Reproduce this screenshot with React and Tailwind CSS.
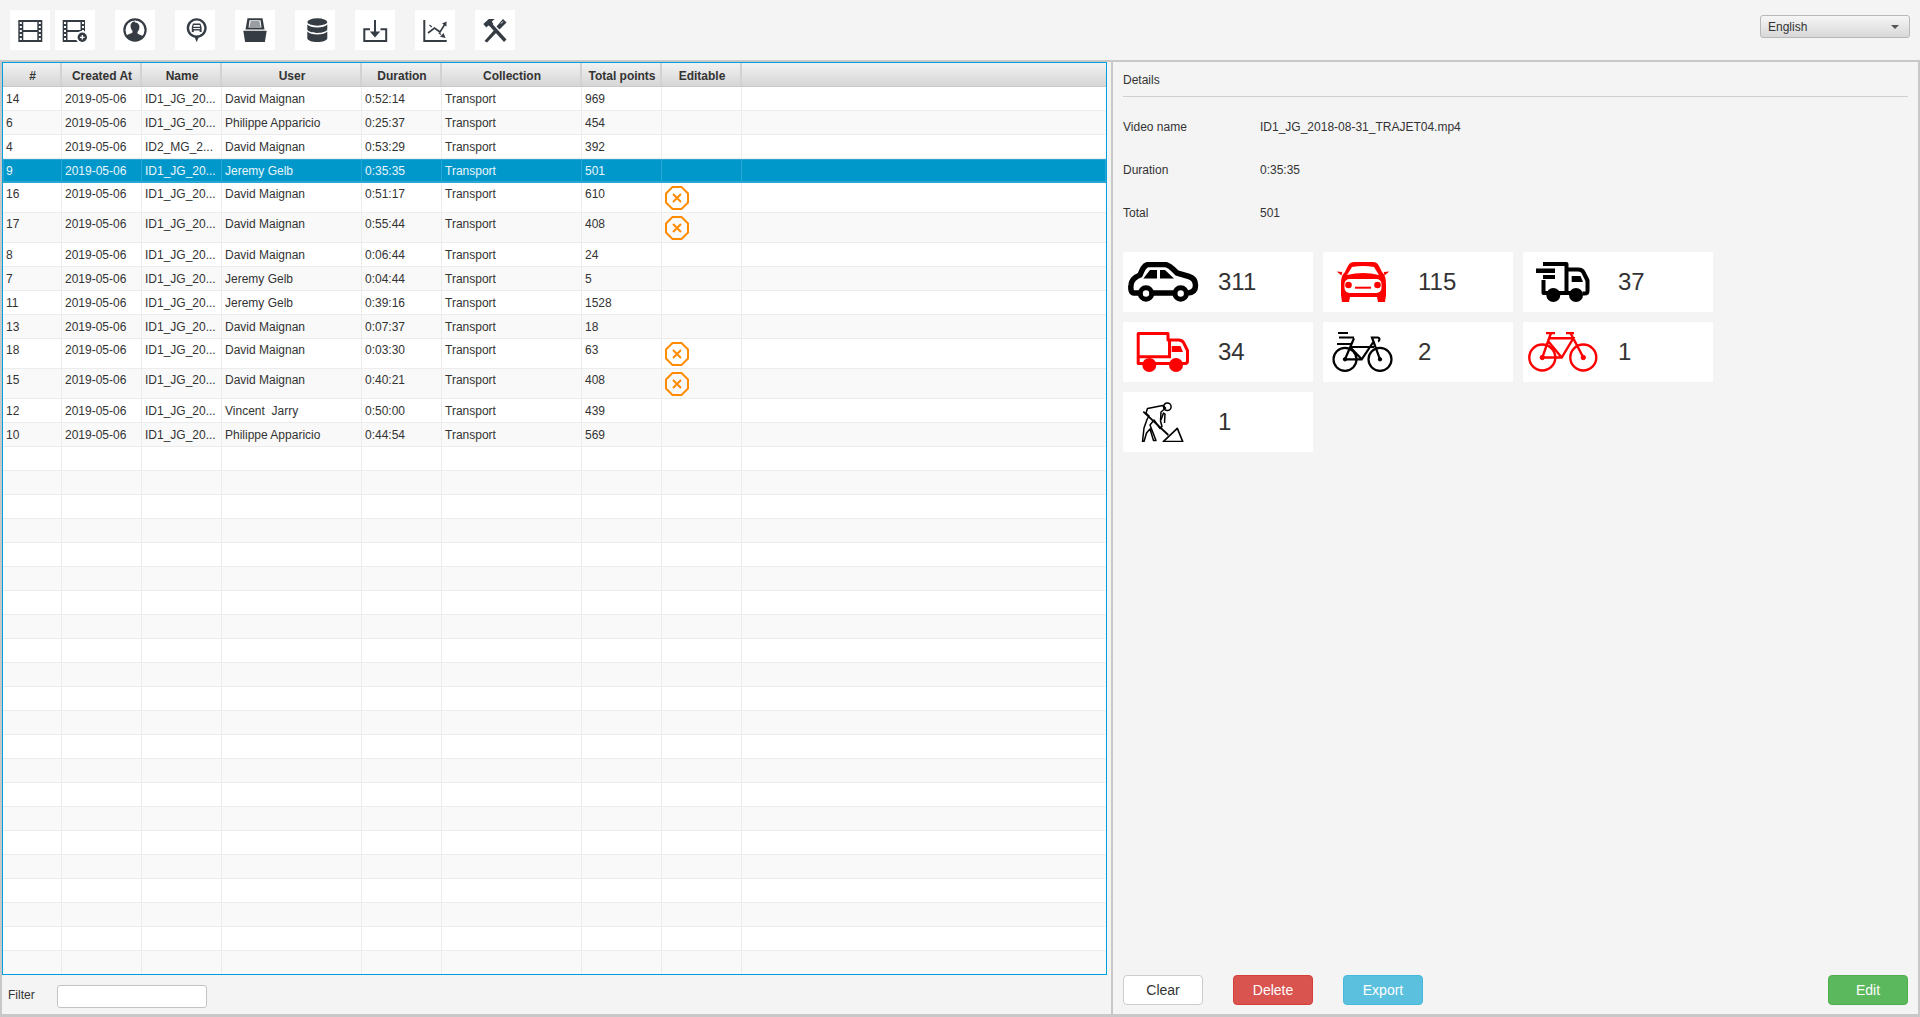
import React from 'react';

const INK = '#363c44';

const columns = [
  { label: '#', width: 'w-[59px]', key: 'id' },
  { label: 'Created At', width: 'w-[80px]', key: 'date' },
  { label: 'Name', width: 'w-[80px]', key: 'name' },
  { label: 'User', width: 'w-[140px]', key: 'user' },
  { label: 'Duration', width: 'w-[80px]', key: 'duration' },
  { label: 'Collection', width: 'w-[140px]', key: 'collection' },
  { label: 'Total points', width: 'w-[80px]', key: 'points' },
  { label: 'Editable', width: 'w-[80px]', key: 'editable' },
];

const row = (id, name, user, duration, points, locked = false, selected = false) => ({
  id, date: '2019-05-06', name, user, duration, collection: 'Transport', points, locked, selected,
});

const rows = [
  row('14', 'ID1_JG_20...', 'David Maignan', '0:52:14', '969'),
  row('6', 'ID1_JG_20...', 'Philippe Apparicio', '0:25:37', '454'),
  row('4', 'ID2_MG_2...', 'David Maignan', '0:53:29', '392'),
  row('9', 'ID1_JG_20...', 'Jeremy Gelb', '0:35:35', '501', false, true),
  row('16', 'ID1_JG_20...', 'David Maignan', '0:51:17', '610', true),
  row('17', 'ID1_JG_20...', 'David Maignan', '0:55:44', '408', true),
  row('8', 'ID1_JG_20...', 'David Maignan', '0:06:44', '24'),
  row('7', 'ID1_JG_20...', 'Jeremy Gelb', '0:04:44', '5'),
  row('11', 'ID1_JG_20...', 'Jeremy Gelb', '0:39:16', '1528'),
  row('13', 'ID1_JG_20...', 'David Maignan', '0:07:37', '18'),
  row('18', 'ID1_JG_20...', 'David Maignan', '0:03:30', '63', true),
  row('15', 'ID1_JG_20...', 'David Maignan', '0:40:21', '408', true),
  row('12', 'ID1_JG_20...', 'Vincent  Jarry', '0:50:00', '439'),
  row('10', 'ID1_JG_20...', 'Philippe Apparicio', '0:44:54', '569'),
];

const emptyRows = Array.from({ length: 22 }, (_, i) => i);

const ToolIcon = ({ children }) => (
  <button className="w-10 h-10 bg-white shrink-0">
    <svg viewBox="0 0 40 40" className="w-10 h-10">{children}</svg>
  </button>
);

const FilmFrame = ({ x }) => (
  <g>
    <rect x={x} y="10" width="24" height="22" fill={INK} />
    <rect x={x + 5} y="12" width="14" height="8" fill="white" />
    <rect x={x + 5} y="22" width="14" height="8" fill="white" />
    {[12, 16, 20, 24, 28].map((y) => (
      <g key={y}>
        <rect x={x + 1.5} y={y} width="2" height="2" fill="white" />
        <rect x={x + 20.5} y={y} width="2" height="2" fill="white" />
      </g>
    ))}
  </g>
);

const Toolbar = () => (
  <div className="flex">
    <ToolIcon><FilmFrame x={8.3} /></ToolIcon>
    <div className="ml-[5px]">
      <ToolIcon>
        <rect x="7.7" y="10" width="22.3" height="22" fill={INK} />
        <rect x="12.5" y="12" width="13" height="8" fill="white" />
        <rect x="12.5" y="22" width="13" height="8" fill="white" />
        {[12, 16, 20, 24, 28].map((y) => (
          <g key={y}>
            <rect x="9" y={y} width="2" height="2" fill="white" />
            <rect x="27" y={y} width="2" height="2" fill="white" />
          </g>
        ))}
        <circle cx="27.3" cy="27.3" r="6.5" fill="white" />
        <circle cx="27.3" cy="27.3" r="4.7" fill={INK} />
        <path d="M27.3 25v4.6M25 27.3h4.6" stroke="white" strokeWidth="1.3" />
      </ToolIcon>
    </div>
    <div className="ml-5">
      <ToolIcon>
        <circle cx="20" cy="20" r="10.6" fill="white" stroke={INK} strokeWidth="2.2" />
        <path d="M20 12.5c3 0 4.6 2.3 4.4 5-.1 2-1 3.4-1.9 4.4v1.6c1 1 5 1.8 6.3 3.4A10.4 10.4 0 0 1 20 30.6a10.4 10.4 0 0 1-8.8-4.7c1.3-1.6 5.3-2.4 6.3-3.4v-1.6c-.9-1-1.8-2.4-1.9-4.4-.2-2.7 1.4-5 4.4-5z" fill={INK} />
      </ToolIcon>
    </div>
    <div className="ml-5">
      <ToolIcon>
        <path d="M21.7 8.3c5.5 0 10 4.4 10 9.8 0 4.9-3.500 9-8.200 9.700l-1.800 4.500-1.800-4.500c-4.700-.7-8.200-4.800-8.200-9.700 0-5.400 4.500-9.800 10-9.800z" fill={INK} />
        <circle cx="21.7" cy="18" r="7.6" fill="white" />
        <path d="M18 13.5h7.4l1.200 3.500v5h-2v-1.400h-5.800V22h-2v-5z" fill={INK} />
        <path d="M18.800 14.900h5.800l.6 1.800h-7z" fill="white" />
        <path d="M18.200 18.600h6.900" stroke="white" strokeWidth="1" />
      </ToolIcon>
    </div>
    <div className="ml-5">
      <ToolIcon>
        <path d="M12.500 8.300h15l2 11.200h-19z" fill={INK} />
        <path d="M14.500 10.300h11l1 7.200h-13z" fill="white" />
        <path d="M15.500 12h9M15 14h10M14.500 16h11" stroke={INK} strokeWidth="1.200" />
        <path d="M8.300 20.800h23.400l-1.800 11.200H10.100z" fill={INK} />
      </ToolIcon>
    </div>
    <div className="ml-5">
      <ToolIcon>
        <ellipse cx="22.300" cy="12" rx="10" ry="3.700" fill={INK} />
        <path d="M12.300 14.600c1.600 2 5.500 3 10 3s8.400-1 10-3v4.600c0 2-4.500 3.700-10 3.700s-10-1.700-10-3.700z" fill={INK} />
        <path d="M12.300 21.600c1.600 2 5.500 3 10 3s8.400-1 10-3v6.600c0 2-4.500 3.800-10 3.800s-10-1.800-10-3.800z" fill={INK} />
      </ToolIcon>
    </div>
    <div className="ml-5">
      <ToolIcon>
        <path d="M15 19.300H9.300V31h21.900V19.300h-5.700" fill="none" stroke={INK} strokeWidth="2" />
        <path d="M20 10v15" stroke={INK} strokeWidth="2" />
        <path d="M14.800 21.500h10.400L20 27.500z" fill={INK} />
      </ToolIcon>
    </div>
    <div className="ml-5">
      <ToolIcon>
        <path d="M9.300 10v21h22.400" fill="none" stroke={INK} strokeWidth="2" />
        <path d="M13 23l6.500-5 5.500 4 5-8" fill="none" stroke={INK} strokeWidth="1.600" />
        <path d="M27 13.500l4.500-2v5zM30.500 28l-5.500-1.300 3.600-3.600z" fill={INK} />
        <path d="M14.500 15l12 10" stroke={INK} strokeWidth="1.200" strokeDasharray="3 9" />
      </ToolIcon>
    </div>
    <div className="ml-5">
      <ToolIcon>
        <path d="M9.500 31l11-12.500 2.500 2.500L12 32.500z" fill={INK} />
        <path d="M8.300 14l5.500-5h6l-3 2.500 1.500 2.500-2.500 2.500-2.500-1-2 2z" fill={INK} />
        <path d="M14 15.500L29 32l2.500-2.500L17 13.500z" fill={INK} />
        <path d="M21.500 16.500l6.500-7.500 3.500 3.500-7 7z" fill={INK} />
        <path d="M26 13.500l1.800-2" stroke="white" strokeWidth="1" />
      </ToolIcon>
    </div>
  </div>
);

const LanguageSelect = () => (
  <div className="mt-[15px] mr-[10px] w-[150px] h-[23px] flex items-center justify-between px-[7px] text-[12px] text-[#333] border border-[#b8b8b8] rounded-[3px] bg-gradient-to-b from-[#f6f6f6] to-[#d8d8d8]">
    <span>English</span>
    <svg viewBox="0 0 8 4" className="w-2 h-1 mr-[3px]"><path d="M0 0h8L4 4z" fill="#555" /></svg>
  </div>
);

const LockedIcon = () => (
  <svg viewBox="0 0 24 24" className="w-6 h-6">
    <path d="M7.500 1h9L23 7.500v9L16.500 23h-9L1 16.500v-9z" fill="none" stroke="#ff8c00" strokeWidth="2" />
    <path d="M8 8l8 8M16 8l-8 8" stroke="#ff8c00" strokeWidth="2" />
  </svg>
);

const TableRow = ({ data, striped }) => {
  const tall = data.locked;
  const tone = data.selected
    ? 'bg-[#0097cb] text-[#eaf6fb] border-[#2aa6d2] shadow-[inset_0_0_0_1px_#2aa6d2]'
    : striped
      ? 'bg-[#f9f9f9] text-[#333] border-[#ececec]'
      : 'bg-white text-[#333] border-[#ececec]';
  const divider = data.selected ? 'border-[#27a6d3]' : 'border-[#ececec]';

  return (
    <div className={`flex border-b ${tone} ${tall ? 'h-[30px]' : 'h-6'}`}>
      {columns.map((col) => (
        <div
          key={col.key}
          className={`${col.width} shrink-0 border-r ${divider} pl-[3px] whitespace-pre leading-[14px] ${tall ? 'pt-[4px]' : 'pt-[5px]'}`}
        >
          {col.key === 'editable'
            ? data.locked && <div className="-mt-px"><LockedIcon /></div>
            : data[col.key]}
        </div>
      ))}
    </div>
  );
};

const VideoTable = () => (
  <div className="h-[913px] border border-[#009fe0] overflow-hidden text-[12px] bg-white">
    <div className="flex h-6 bg-gradient-to-b from-[#f2f2f2] to-[#d6d6d6] border-b border-[#c8c8c8] font-bold text-[#333]">
      {columns.map((col) => (
        <div key={col.key} className={`${col.width} shrink-0 border-r-2 border-[#d2d2d2] flex items-center justify-center pl-[2px] pt-[2px]`}>
          {col.label}
        </div>
      ))}
    </div>
    {rows.map((data, i) => (
      <TableRow key={data.id} data={data} striped={i % 2 === 1} />
    ))}
    {emptyRows.map((i) => (
      <div key={i} className={`flex h-6 border-b border-[#ececec] ${i % 2 === 0 ? 'bg-white' : 'bg-[#f9f9f9]'}`}>
        {columns.map((col) => (
          <div key={col.key} className={`${col.width} shrink-0 border-r border-[#ececec]`} />
        ))}
      </div>
    ))}
  </div>
);

const CarIcon = () => (
  <svg viewBox="0 0 80 40" className="w-20 h-10">
    <path d="M16 31h-5c-3 0-3.500-4-3-8 .5-5 4-8 9-10 2-5 4-10 8-10.500h17c4 0 8 4.500 12 8.500l12 3.500c5 1.500 6.500 5 6.500 9 0 4-2 7-7.500 7.500M29 31h22" fill="none" stroke="black" strokeWidth="5.500" />
    <path d="M20.300 16.500L27 8h7v8.500zM37 8h5l9 8.500H37z" />
    <circle cx="23" cy="31.500" r="5.700" fill="white" stroke="black" strokeWidth="5" />
    <circle cx="57.700" cy="31.500" r="5.700" fill="white" stroke="black" strokeWidth="5" />
  </svg>
);

const RedCarIcon = () => (
  <svg viewBox="0 0 80 40" className="w-20 h-10">
    <path d="M30 0h20c5 0 6 4 9 10 3 3 4 6 4 13v10l-1 7h-7l-1-5H27l-1 5h-7l-1-7V23c0-7 1-10 4-13 3-6 4-10 9-10z" fill="red" />
    <path d="M13.700 9.500l5.500.5-.7 3.500zM66.300 9.500l-5.500.5.7 3.500z" fill="red" />
    <path d="M29 5q11-2 22 0l5 8q-16-4-32 0z" fill="white" />
    <rect x="21.500" y="17" width="37" height="14" rx="5" fill="white" />
    <circle cx="25.500" cy="23" r="3.300" fill="red" />
    <circle cx="54.500" cy="23" r="3.300" fill="red" />
    <path d="M32 25.700h16" stroke="red" strokeWidth="2" />
  </svg>
);

const FastTruckIcon = () => (
  <svg viewBox="0 0 80 40" className="w-20 h-10">
    <path d="M13 6.500h19v4.500H13zM20 13h12v4H20z" />
    <path d="M20 2h23.500v29H24M24 31h-3.500v-13" fill="none" stroke="black" strokeWidth="4" strokeLinejoin="round" />
    <path d="M44 7.500h11c3 0 5 1 6 4l3.500 7V29c0 2-1 2.500-3 2.500h-2M34 31h10M43 31h10" fill="none" stroke="black" strokeWidth="4" strokeLinejoin="round" />
    <path d="M48.700 14h8.800l2.500 6H48.700z" />
    <circle cx="30.300" cy="33" r="7" />
    <circle cx="53" cy="33" r="7" />
  </svg>
);

const RedTruckIcon = () => (
  <svg viewBox="0 0 80 40" className="w-20 h-10">
    <path d="M15.200 1.500H45V8h10c3 0 5 1 6 3.500l3.500 7V29c0 1.500-.8 2.500-2.500 2.500H15.200z" fill="white" stroke="red" strokeWidth="3" strokeLinejoin="round" />
    <path d="M15 24.700h31.500V8" fill="none" stroke="red" strokeWidth="3" />
    <path d="M48.700 14h8.800l2.500 6H48.700z" fill="red" />
    <circle cx="26.300" cy="33" r="7" fill="red" />
    <circle cx="53" cy="33" r="7" fill="red" />
  </svg>
);

const BikeIcon = () => (
  <svg viewBox="0 0 80 40" className="w-20 h-10" fill="none" stroke="black">
    <circle cx="22" cy="27.300" r="11.500" strokeWidth="2.200" />
    <circle cx="57" cy="27.300" r="11.500" strokeWidth="2.200" />
    <path d="M15 1h10M16 5.500h15M14 12h15" strokeWidth="2.200" />
    <path d="M22 27.300l9-21M22 27.300h16.700L51 9M27 15h24M27 15l11.700 12.300M57 27.300L49 5.500h5.500c2.500 0 2.500 3.500.5 4" strokeWidth="2.200" />
    <circle cx="22" cy="27.300" r="1.700" fill="black" />
    <circle cx="57" cy="27.300" r="1.700" fill="black" />
  </svg>
);

const RedBikeIcon = () => (
  <svg viewBox="0 0 80 40" className="w-20 h-10" fill="none" stroke="red">
    <circle cx="19.300" cy="25.500" r="13" strokeWidth="2.400" />
    <circle cx="60.300" cy="25.500" r="13" strokeWidth="2.400" />
    <path d="M23 1h9M43 1h8" strokeWidth="2.400" />
    <path d="M28 1L19.300 25.500H38.700L50.300 6.300H25.500M25 9L38.700 25.500M47.500 1L60.300 25.500" strokeWidth="2.400" />
    <circle cx="19.300" cy="25.500" r="2.200" fill="red" />
    <circle cx="60.300" cy="25.500" r="2.200" fill="red" />
  </svg>
);

const WorkerIcon = () => (
  <svg viewBox="0 0 80 40" className="w-20 h-10" fill="none" stroke="black" strokeWidth="1.500" strokeLinejoin="round">
    <circle cx="44.300" cy="4.800" r="3.800" />
    <path d="M20.300 9.700L45.300 33" strokeWidth="1.800" />
    <path d="M40.300 39.500l14-13.200 5.400 13.200z" strokeWidth="1.700" />
    <path d="M24.500 6.500l14-2.800c2-.4 3 .5 4 2.500L38 10l-.5 9 1.500 5.500-2 2-6-8.500-4 5 6 15.500h-2.500L27 27l-3.500 4-2.500 8.500h-1.500L21 26l3-8.500 2-3.500-3-3z" />
    <path d="M38 18l2.500-7 1.500 1-.5 9" />
  </svg>
);

const stats = [
  { icon: CarIcon, value: '311' },
  { icon: RedCarIcon, value: '115' },
  { icon: FastTruckIcon, value: '37' },
  { icon: RedTruckIcon, value: '34' },
  { icon: BikeIcon, value: '2' },
  { icon: RedBikeIcon, value: '1' },
  { icon: WorkerIcon, value: '1' },
];

const buttonBase = 'w-20 h-[30px] rounded text-[14px] border';

const DetailsPanel = () => (
  <div className="flex-1 flex flex-col pl-[10px] pr-[10px] pb-[9px] pt-[11px] text-[12px] text-[#333] border-l-2 border-[#c8c8c8]">
    <div className="leading-[14px] pb-[9px] border-b border-[#cfcfcf]">Details</div>
    <div className="mt-2">
      {[
        ['Video name', 'ID1_JG_2018-08-31_TRAJET04.mp4'],
        ['Duration', '0:35:35'],
        ['Total', '501'],
      ].map(([label, value]) => (
        <div key={label} className="flex items-center h-[43px]">
          <span className="w-[137px]">{label}</span>
          <span>{value}</span>
        </div>
      ))}
    </div>
    <div className="mt-[18px] grid grid-cols-[190px_190px_190px] gap-[10px]">
      {stats.map(({ icon: Icon, value }, i) => (
        <div key={i} className="h-[60px] bg-white flex items-center">
          <Icon />
          <span className="ml-[15px] text-[24px] text-[#333]">{value}</span>
        </div>
      ))}
    </div>
    <div className="mt-auto flex gap-[30px]">
      <button className={`${buttonBase} bg-white border-[#ccc] text-[#333]`}>Clear</button>
      <button className={`${buttonBase} bg-[#d9534f] border-[#d43f3a] text-white`}>Delete</button>
      <button className={`${buttonBase} bg-[#5bc0de] border-[#46b8da] text-white`}>Export</button>
      <button className={`${buttonBase} ml-auto bg-[#5cb85c] border-[#4cae4c] text-white`}>Edit</button>
    </div>
  </div>
);

export default function App() {
  return (
    <div className="h-screen flex flex-col bg-[#f4f4f4] font-['Liberation_Sans',Arial,sans-serif] overflow-hidden">
      <div className="h-[60px] shrink-0 flex justify-between pl-[10px] pt-[10px]">
        <Toolbar />
        <div className="-mt-[10px]">
          <LanguageSelect />
        </div>
      </div>
      <div className="flex-1 min-h-0 flex border-t-2 border-x-2 border-b-[3px] border-[#c8c8c8]">
        <div className="w-[1105px] shrink-0 flex flex-col">
          <VideoTable />
          <div className="flex items-center pl-[6px] pt-[10px] text-[12px] text-[#333]">
            <span className="w-[49px] mb-[3px]">Filter</span>
            <input className="w-[150px] h-[23px] bg-white border border-[#c4c4c4] rounded-[3px] outline-none" />
          </div>
        </div>
        <div className="w-[4px] shrink-0" />
        <DetailsPanel />
      </div>
    </div>
  );
}
